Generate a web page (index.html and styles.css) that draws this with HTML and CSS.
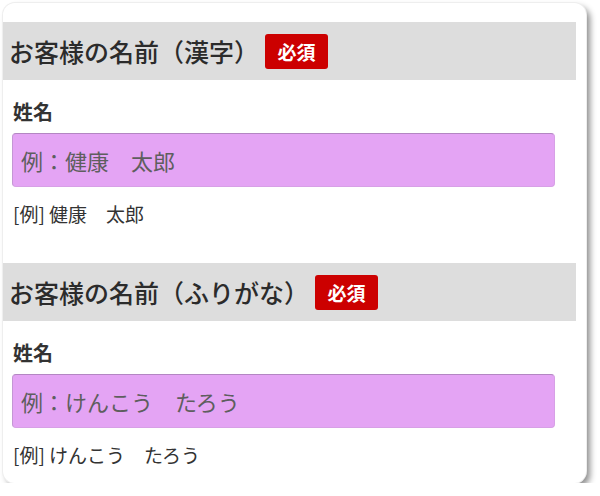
FILE: index.html
```html
<!DOCTYPE html>
<html lang="ja">
<head>
<meta charset="utf-8">
<link rel="stylesheet" href="styles.css">
</head>
<body>
<div class="card">
  <section class="section">
    <h2 class="band"><span class="title">お客様の名前（漢字）</span><span class="badge">必須</span></h2>
    <div class="field">
      <div class="label">姓名</div>
      <input class="input" type="text" placeholder="例：健康　太郎">
      <div class="hint">[例] 健康　太郎</div>
    </div>
  </section>
  <section class="section">
    <h2 class="band"><span class="title">お客様の名前（ふりがな）</span><span class="badge">必須</span></h2>
    <div class="field">
      <div class="label">姓名</div>
      <input class="input" type="text" placeholder="例：けんこう　たろう">
      <div class="hint">[例] けんこう　たろう</div>
    </div>
  </section>
</div>
</body>
</html>
```
FILE: styles.css
```css
html, body {
  margin: 0;
  padding: 0;
  background: #ffffff;
}
body {
  font-family: "Noto Sans CJK JP", "Noto Sans", sans-serif;
  color: #333333;
}
.card {
  margin: 3px 0 0 3px;
  width: 583px;
  height: 480px;
  box-sizing: border-box;
  padding: 19px 10px 0 0;
  background: #ffffff;
  border-radius: 12px;
  box-shadow: 0 0 0 1px #eeeeee, 4px 4px 6px rgba(0, 0, 0, 0.45);
}
.section + .section {
  margin-top: 36px;
}
.band {
  margin: 0;
  height: 58px;
  background: #dddddd;
  display: flex;
  align-items: center;
  padding-left: 6px;
  gap: 6px;
  font-size: 25px;
  font-weight: 500;
  line-height: 1;
  color: #2b2b2b;
}
.badge {
  display: flex;
  align-items: center;
  justify-content: center;
  width: 63px;
  height: 35px;
  border-radius: 3px;
  background: #cc0000;
  color: #ffffff;
  font-size: 19px;
  font-weight: 700;
}
.field {
  padding: 17px 0 0 9px;
}
.label {
  font-size: 20px;
  font-weight: 700;
  line-height: 30px;
  margin-left: 1px;
}
.input {
  display: block;
  margin-top: 6px;
  width: 543px;
  height: 54px;
  box-sizing: border-box;
  padding: 0 8px;
  border: 1px solid #d7a0e6;
  border-top-color: #b386c2;
  border-left-color: #c496d4;
  border-radius: 4px;
  background: #e4a4f4;
  font-family: "Noto Sans CJK JP", "Noto Sans", sans-serif;
  font-size: 22px;
  color: #444444;
  outline: none;
}
.input::placeholder {
  color: #5e5e5e;
  opacity: 1;
}
.hint {
  margin-top: 13px;
  margin-left: 1px;
  font-size: 19px;
  line-height: 27px;
  color: #333333;
}
```
